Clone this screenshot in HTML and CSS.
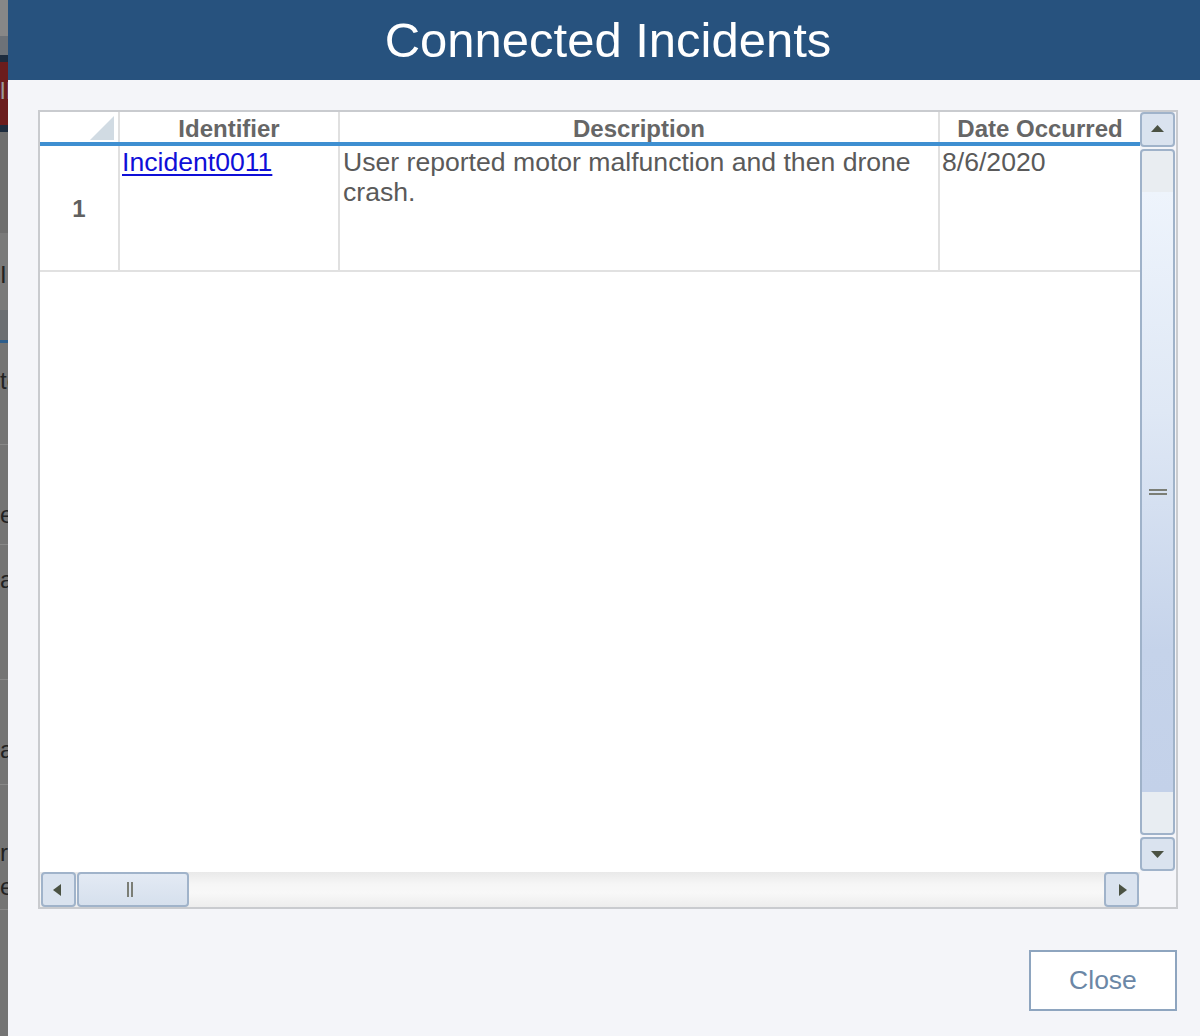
FILE: index.html
```html
<!DOCTYPE html>
<html lang="en">
<head>
<meta charset="utf-8">
<title>Connected Incidents</title>
<link rel="stylesheet" href="styles.css">
</head>
<body>
<div class="page">
  <div class="backdrop">
    <div class="bd bd-a"></div>
    <div class="bd bd-b"></div>
    <div class="bd bd-navy"></div>
    <div class="bd bd-red"><span class="bd-txt light">ll</span></div>
    <div class="bd bd-navy"></div>
    <div class="bd bd-g1"></div>
    <div class="bd bd-g2"><span class="bd-txt">I</span></div>
    <div class="bd bd-g3"></div>
    <div class="bd bd-line"></div>
    <div class="bd bd-row r1"><span class="bd-txt">te</span></div>
    <div class="bd bd-row r2"><span class="bd-txt">e</span></div>
    <div class="bd bd-row r3"><span class="bd-txt">a</span></div>
    <div class="bd bd-row r4"><span class="bd-txt">a</span></div>
    <div class="bd bd-row r5"><span class="bd-txt">r</span><span class="bd-txt">e</span></div>
    <div class="bd bd-rest"></div>
  </div>

  <div class="modal">
    <header class="modal-header">
      <h1 class="modal-title">Connected Incidents</h1>
    </header>
    <div class="modal-body">
      <div class="grid-frame">
        <div class="grid-main">
          <div class="grid-table">
            <div class="row head">
              <div class="cell c-num"><span class="corner"></span></div>
              <div class="cell c-id">Identifier</div>
              <div class="cell c-desc">Description</div>
              <div class="cell c-date">Date Occurred</div>
            </div>
            <div class="row data">
              <div class="cell c-num num">1</div>
              <div class="cell c-id"><a class="link" href="#">Incident0011</a></div>
              <div class="cell c-desc">User reported motor malfunction and then drone crash.</div>
              <div class="cell c-date">8/6/2020</div>
            </div>
          </div>
          <div class="hscroll">
            <div class="sb-btn h-btn h-left">
              <svg width="8" height="12" viewBox="0 0 8 12"><polygon points="8,0 8,12 0,6" fill="#4b5243"/></svg>
            </div>
            <div class="h-thumb">
              <span class="vgrip"></span><span class="vgrip"></span>
            </div>
            <div class="h-track"></div>
            <div class="sb-btn h-btn h-right">
              <svg width="8" height="12" viewBox="0 0 8 12"><polygon points="0,0 0,12 8,6" fill="#4b5243"/></svg>
            </div>
          </div>
        </div>
        <div class="vscroll">
          <div class="sb-btn v-btn v-up">
            <svg width="13" height="7" viewBox="0 0 13 7"><polygon points="0,7 13,7 6.5,0" fill="#4b5243"/></svg>
          </div>
          <div class="v-thumb">
            <span class="hgrip"></span><span class="hgrip"></span>
          </div>
          <div class="sb-btn v-btn v-down">
            <svg width="13" height="7" viewBox="0 0 13 7"><polygon points="0,0 13,0 6.5,7" fill="#4b5243"/></svg>
          </div>
          <div class="sb-corner"></div>
        </div>
      </div>
      <div class="footer">
        <button class="btn-close" type="button">Close</button>
      </div>
    </div>
  </div>
</div>
</body>
</html>
```

FILE: styles.css
```css
html, body {
  margin: 0;
  padding: 0;
}
body {
  width: 1200px;
  height: 1036px;
  overflow: hidden;
  font-family: "Liberation Sans", Arial, Helvetica, sans-serif;
  background: #f4f5f9;
}
.page {
  display: flex;
  width: 1200px;
  height: 1036px;
}

/* Greyed-out page behind the modal */
.backdrop {
  width: 8px;
  flex: 0 0 8px;
  display: flex;
  flex-direction: column;
  overflow: hidden;
  background: #747474;
}
.bd { flex: 0 0 auto; overflow: hidden; white-space: nowrap; }
.bd-a { height: 36px; background: #878787; }
.bd-b { height: 19px; background: #6d7278; }
.bd-navy { height: 7px; background: #1d2c3e; }
.bd-red { height: 63px; background: #6b1d1d; padding-top: 17px; box-sizing: border-box; }
.bd-g1 { height: 101px; background: #6e6e6e; }
.bd-g2 { height: 77px; background: #7a7a7a; padding-top: 30px; box-sizing: border-box; }
.bd-g3 { height: 30px; background: #6b6e72; }
.bd-line { height: 3px; background: #2e5e8c; }
.bd-txt {
  display: block;
  font-size: 24px;
  line-height: 24px;
  color: #222;
  font-family: "Liberation Sans", Arial, sans-serif;
}
.bd-txt.light { color: #9a9a9a; letter-spacing: 1px; }
.bd-row {
  border-bottom: 1px solid #888;
  background: #747474;
  box-sizing: border-box;
}
.r1 { height: 102px; padding-top: 26px; }
.r2 { height: 100px; padding-top: 58px; }
.r3 { height: 135px; padding-top: 23px; }
.r4 { height: 105px; padding-top: 58px; }
.r5 { height: 125px; padding-top: 51px; }
.r5 .bd-txt { line-height: 34px; }
.bd-rest { flex: 1 1 auto; background: #747474; }

/* Modal */
.modal {
  flex: 1 1 auto;
  display: flex;
  flex-direction: column;
  background: #f4f5f9;
}
.modal-header {
  height: 80px;
  background: #27527e;
  display: flex;
  align-items: center;
  justify-content: center;
  padding-left: 8px;
}
.modal-title {
  margin: 0;
  font-weight: normal;
  font-size: 49px;
  line-height: 80px;
  color: #ffffff;
}
.modal-body {
  padding: 30px 22px 0 30px;
}

/* Grid */
.grid-frame {
  width: 1136px;
  height: 795px;
  border: 2px solid #c9cbcf;
  display: flex;
  background: #ffffff;
}
.grid-main {
  width: 1100px;
  display: flex;
  flex-direction: column;
}
.grid-table {
  flex: 1 1 auto;
  background: #ffffff;
}
.row {
  display: flex;
}
.row.head {
  height: 30px;
  border-bottom: 4px solid #3e8fd1;
}
.row.data {
  height: 124px;
  border-bottom: 2px solid #e1e1e1;
}
.cell {
  box-sizing: border-box;
  border-right: 2px solid #e0e0e0;
  color: #5a5a5a;
}
.c-num { width: 80px; position: relative; }
.c-id { width: 220px; }
.c-desc { width: 600px; }
.c-date { width: 200px; border-right: none; }

.head .cell {
  font-weight: bold;
  font-size: 24px;
  line-height: 26px;
  padding-top: 4px;
  text-align: center;
  color: #666666;
}
.corner {
  position: absolute;
  right: 4px;
  bottom: 2px;
  width: 24px;
  height: 24px;
  background: #d1dbe3;
  clip-path: polygon(100% 0, 100% 100%, 0 100%);
}
.data .cell {
  font-size: 26.6px;
  line-height: 30px;
  padding: 1px 2px 0 2px;
}
.data .c-desc { padding-left: 3px; padding-right: 3px; }
.data .num {
  display: flex;
  align-items: center;
  justify-content: center;
  font-weight: bold;
  font-size: 24px;
  color: #606060;
  padding: 2px 0 0 0;
}
.link {
  color: #0f0fd8;
  text-decoration: underline;
  text-decoration-thickness: 2px;
  text-underline-offset: 3px;
}

/* Scrollbars */
.sb-btn {
  box-sizing: border-box;
  background: #dae3ef;
  border: 2px solid #a0b3ca;
  border-radius: 4px;
  display: flex;
  align-items: center;
  justify-content: center;
}
.hscroll {
  height: 35px;
  display: flex;
  background: linear-gradient(to bottom, #e9e9e9 0%, #f6f6f6 35%, #f8f8f8 60%, #ededed 100%);
}
.h-btn { width: 35px; height: 35px; flex: 0 0 auto; }
.h-left { margin-left: 1px; }
.h-right { margin-right: 1px; }
.h-left svg { margin-right: 4px; }
.h-right svg { margin-left: 2px; }
.h-thumb {
  box-sizing: border-box;
  width: 112px;
  height: 35px;
  margin-left: 1px;
  flex: 0 0 auto;
  border: 2px solid #a0b3ca;
  border-radius: 4px;
  background: linear-gradient(to bottom, #e3eaf4, #d6e0ed);
  display: flex;
  align-items: center;
  justify-content: center;
  gap: 2px;
  padding-right: 6px;
}
.vgrip {
  width: 2px;
  height: 15px;
  background: #7b7e76;
}
.h-track { flex: 1 1 auto; }

.vscroll {
  width: 36px;
  display: flex;
  flex-direction: column;
  background: #f4f5f9;
}
.v-btn { width: 35px; flex: 0 0 auto; }
.v-up { height: 35px; }
.v-down { height: 34px; margin-top: 2px; }
.v-up svg { margin-bottom: 2px; }
.v-down svg { margin-top: 1px; }
.v-thumb {
  box-sizing: border-box;
  width: 35px;
  height: 686px;
  margin-top: 2px;
  border: 2px solid #9fb2c9;
  border-radius: 4px;
  background: linear-gradient(to bottom,
    #e9edf1 0px, #e9edf1 41px,
    #eef4fc 41px, #dfe8f5 260px, #c5d3ea 500px, #c3d1e9 641px,
    #e8edf2 641px, #e8edf2 100%);
  display: flex;
  flex-direction: column;
  align-items: center;
  justify-content: center;
  gap: 2px;
}
.hgrip {
  width: 18px;
  height: 2px;
  background: #7b7e76;
}
.sb-corner {
  flex: 1 1 auto;
  background: #f4f5f9;
}

/* Footer */
.footer {
  display: flex;
  justify-content: flex-end;
  margin-top: 41px;
  padding-right: 1px;
}
.btn-close {
  width: 148px;
  height: 61px;
  box-sizing: border-box;
  background: #ffffff;
  border: 2px solid #8ea5bf;
  border-radius: 0;
  font-family: "Liberation Sans", Arial, sans-serif;
  font-size: 26.5px;
  color: #6b87a6;
  padding: 0;
  cursor: pointer;
}
```
